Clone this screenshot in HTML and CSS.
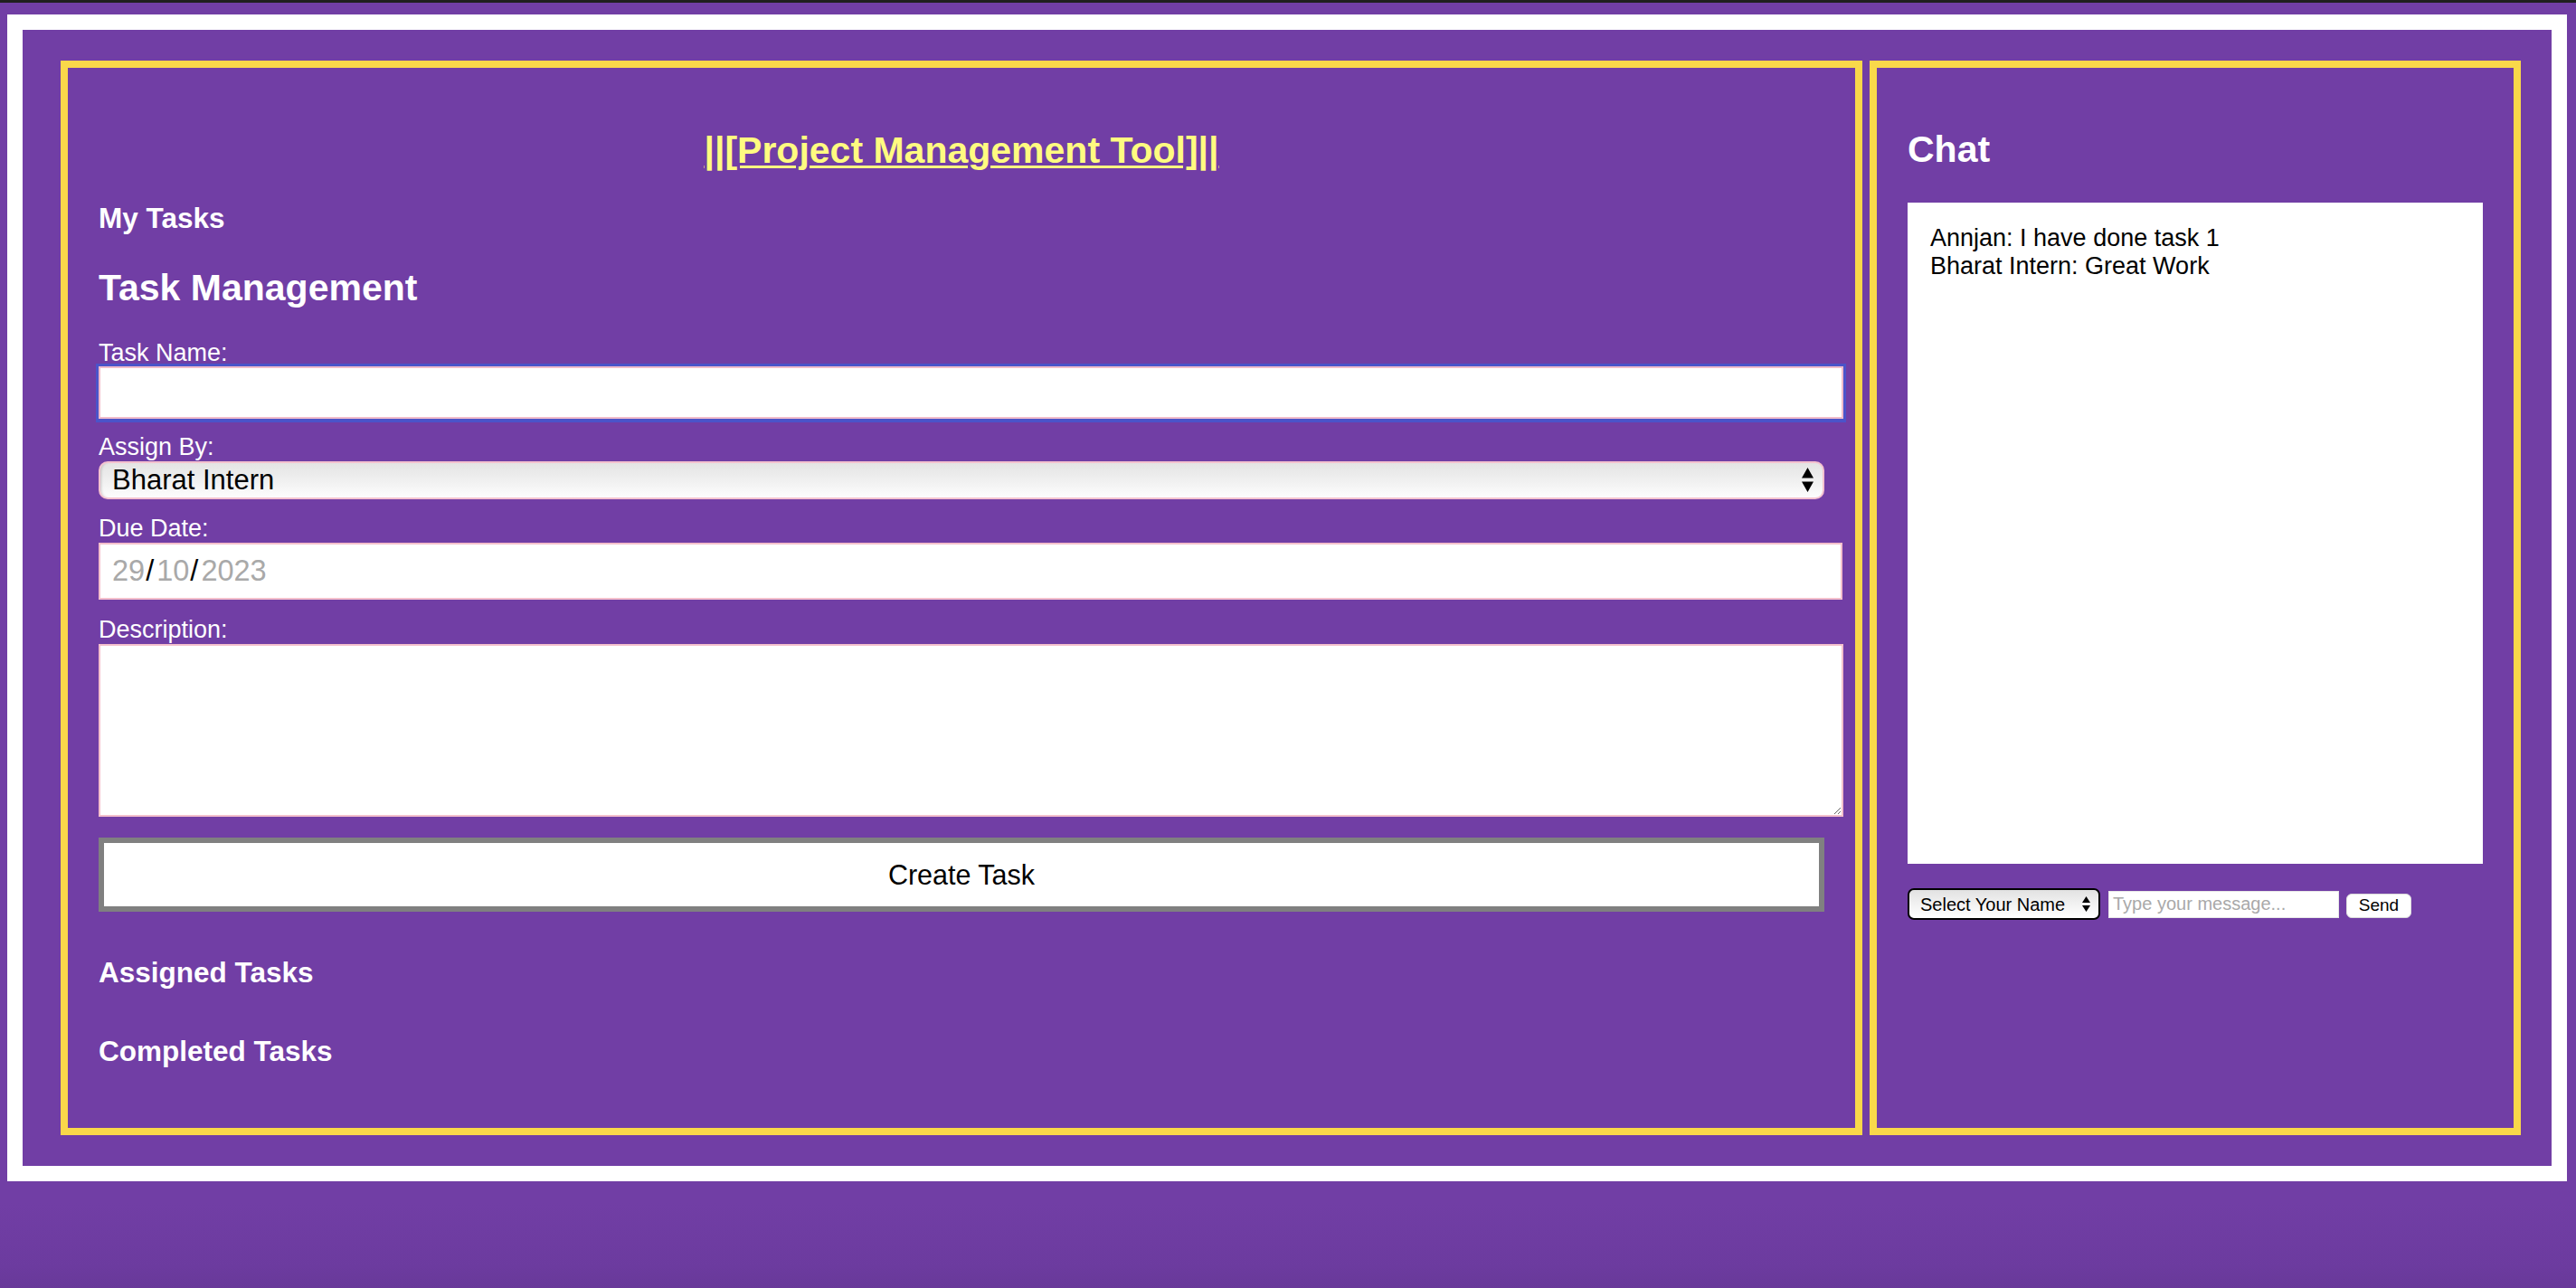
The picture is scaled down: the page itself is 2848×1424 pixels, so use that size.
FILE: index.html
```html
<!DOCTYPE html>
<html lang="en">
<head>
<meta charset="utf-8">
<title>Project Management Tool</title>
<link rel="stylesheet" href="styles.css">
</head>
<body>
<div class="topbar"></div>
<div class="frame">
  <section class="panel panel-main">
    <h1 class="title">||[Project Management Tool]||</h1>
    <h3 class="section-head my-tasks">My Tasks</h3>
    <h2 class="form-title">Task Management</h2>
    <form class="task-form">
      <label class="field-label lbl-name">Task Name:</label>
      <input class="text-input is-focused" type="text">
      <label class="field-label lbl-assign">Assign By:</label>
      <div class="select-wrap">
        <select class="big-select"><option>Bharat Intern</option><option>Annjan</option></select>
        <svg class="select-arrows" viewBox="0 0 13 27" width="13" height="27"><path d="M0 11.5 L6.5 0 L13 11.5 Z M0 15.5 L13 15.5 L6.5 27 Z" fill="#000"/></svg>
      </div>
      <label class="field-label lbl-due">Due Date:</label>
      <div class="date-input"><span class="dpart">29</span><span class="dsep">/</span><span class="dpart">10</span><span class="dsep">/</span><span class="dpart">2023</span></div>
      <label class="field-label lbl-desc">Description:</label>
      <textarea class="desc-input"></textarea>
      <button type="button" class="create-btn">Create Task</button>
    </form>
    <h3 class="section-head assigned">Assigned Tasks</h3>
    <h3 class="section-head completed">Completed Tasks</h3>
  </section>
  <aside class="panel panel-chat">
    <h2 class="chat-title">Chat</h2>
    <div class="chat-box">
      <div class="msg">Annjan: I have done task 1</div>
      <div class="msg">Bharat Intern: Great Work</div>
    </div>
    <div class="chat-controls">
      <div class="chat-select-wrap">
        <select class="chat-select"><option>Select Your Name</option></select>
        <svg class="chat-arrows" viewBox="0 0 9 17" width="9" height="17"><path d="M0 7 L4.5 0 L9 7 Z M0 10 L9 10 L4.5 17 Z" fill="#000"/></svg>
      </div>
      <input class="chat-input" type="text" placeholder="Type your message...">
      <button type="button" class="send-btn">Send</button>
    </div>
  </aside>
</div>
</body>
</html>
```
FILE: styles.css
```css
html, body {
  margin: 0;
  padding: 0;
}
body {
  width: 2848px;
  height: 1424px;
  overflow: hidden;
  background: linear-gradient(to bottom, #713ea5 0, #713ea5 1330px, #6c3b9f 1400px, #683999 1424px);
  font-family: "Liberation Sans", Arial, sans-serif;
  color: #fff;
}
.topbar {
  height: 3px;
  background: #1f1f1f;
}
.frame {
  margin: 13px 10px 0 8px;
  border: 17px solid #fff;
  padding: 34px 34px 34px 42px;
  display: flex;
  gap: 8px;
  background: #713ea5;
}
.panel {
  box-sizing: border-box;
  height: 1188px;
  border: 8px solid #f9d84a;
  padding: 0 34px;
}
.panel-main {
  width: 1992px;
}
.panel-chat {
  width: 720px;
}
h1, h2, h3 {
  margin: 0;
  font-weight: bold;
}
.title {
  margin-top: 68px;
  font-size: 41px;
  line-height: 47px;
  text-align: center;
  color: #fffb80;
  text-decoration: underline;
  text-decoration-thickness: 3px;
  text-underline-offset: 3px;
}
.section-head {
  font-size: 31.5px;
  line-height: 36px;
}
.my-tasks { margin-top: 33px; }
.form-title {
  margin-top: 36px;
  font-size: 41px;
  line-height: 46px;
}
.task-form {
  display: block;
  margin: 0;
}
.field-label {
  display: block;
  font-size: 27px;
  line-height: 30px;
}
.lbl-name { margin-top: 34px; }
.lbl-assign { margin-top: 16px; }
.lbl-due { margin-top: 17px; }
.lbl-desc { margin-top: 18px; }
.text-input {
  display: block;
  box-sizing: border-box;
  width: 1929px;
  height: 58px;
  margin: 0;
  border: 2px solid #f1bccb;
  background: #fff;
  font-family: inherit;
  font-size: 26px;
  padding: 0 12px;
}
.text-input.is-focused {
  outline: none;
  box-shadow: 0 0 0 3px #4b54c9, 0 1px 0 3px #4b54c9;
}
.select-wrap {
  position: relative;
  margin-top: 1px;
  height: 42px;
}
.big-select {
  appearance: none;
  -webkit-appearance: none;
  display: block;
  box-sizing: border-box;
  width: 100%;
  height: 42px;
  margin: 0;
  border: 2px solid #f4c2cf;
  border-radius: 10px;
  background: linear-gradient(to bottom, #e4e4e4 0%, #f1f1f1 55%, #fdfdfd 100%);
  box-shadow: inset 3px 0 3px -2px rgba(0,0,0,0.18);
  font-family: inherit;
  font-size: 31px;
  color: #000;
  padding: 0 0 0 13px;
  line-height: 38px;
}
.select-arrows {
  position: absolute;
  right: 12px;
  top: 7px;
}
.date-input {
  box-sizing: border-box;
  width: 1928px;
  height: 63px;
  margin-top: 1px;
  border: 2px solid #f4c0cc;
  background: #fff;
  padding: 0 0 0 13px;
  display: flex;
  align-items: center;
  font-size: 32.5px;
  color: #a9a9a9;
}
.dpart { color: #a9a9a9; }
.dsep { color: #000; margin: 0 3px 0 1px; }
.desc-input {
  display: block;
  box-sizing: border-box;
  width: 1929px;
  height: 191px;
  margin: 1px 0 0 0;
  border: 2px solid #f4c0cc;
  background: #fff;
  font-family: inherit;
  font-size: 26px;
  resize: both;
  outline: none;
}
.create-btn {
  display: block;
  box-sizing: border-box;
  width: 100%;
  height: 82px;
  margin-top: 23px;
  border: 6px solid #808080;
  background: #fff;
  font-family: inherit;
  font-size: 30.5px;
  color: #000;
  padding: 0;
}
.assigned { margin-top: 49px; }
.completed { margin-top: 51px; }

.chat-title {
  margin-top: 67px;
  font-size: 41px;
  line-height: 47px;
}
.chat-box {
  box-sizing: border-box;
  margin-top: 35px;
  height: 731px;
  background: #fff;
  padding: 24px 25px;
  color: #000;
  font-size: 27px;
  line-height: 31px;
}
.chat-controls {
  margin-top: 27px;
  display: flex;
  align-items: center;
  height: 35px;
}
.chat-select-wrap {
  position: relative;
  width: 213px;
  height: 35px;
}
.chat-select {
  appearance: none;
  -webkit-appearance: none;
  box-sizing: border-box;
  width: 213px;
  height: 35px;
  margin: 0;
  border: 2px solid #000;
  border-radius: 7px;
  background: linear-gradient(to bottom, #e2e2e2 0%, #f3f3f3 55%, #fff 100%);
  font-family: inherit;
  font-size: 20px;
  color: #000;
  padding: 0 0 0 12px;
}
.chat-arrows {
  position: absolute;
  right: 11px;
  top: 9px;
}
.chat-input {
  box-sizing: border-box;
  width: 255px;
  height: 30px;
  margin: 0 0 0 9px;
  border: 1px solid #e8e8e8;
  background: #fff;
  font-family: inherit;
  font-size: 20px;
  padding: 0 4px;
  outline: none;
}
.chat-input::placeholder { color: #a9a9a9; }
.send-btn {
  box-sizing: border-box;
  width: 72px;
  height: 27px;
  margin: 3px 0 0 8px;
  border: 1px solid #dcdcdc;
  border-radius: 6px;
  background: #fff;
  font-family: inherit;
  font-size: 19px;
  color: #000;
  padding: 0;
}
```
